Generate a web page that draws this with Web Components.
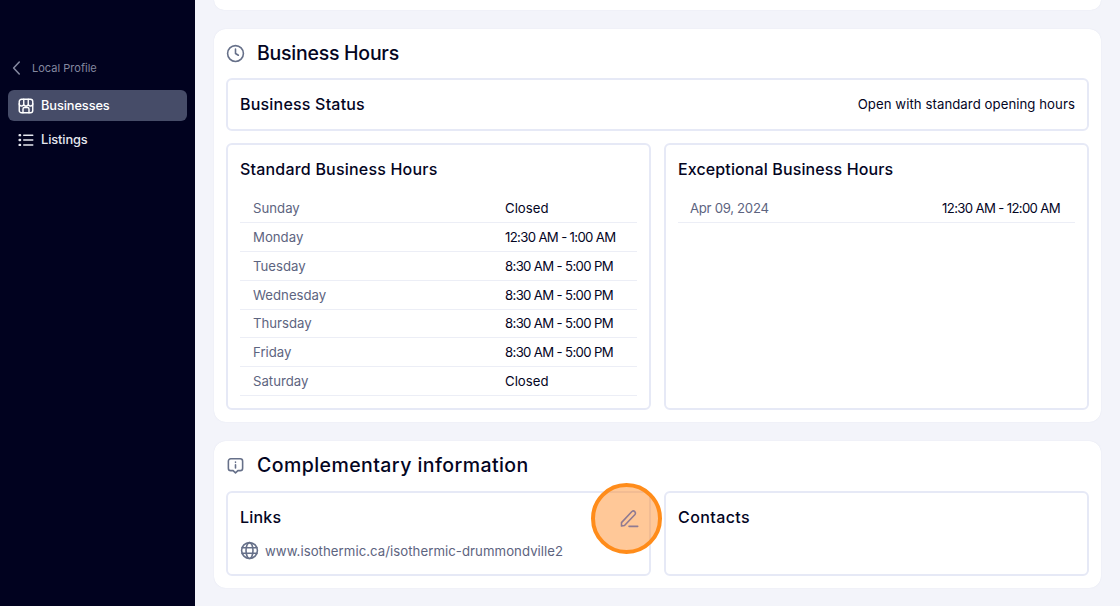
<!DOCTYPE html>
<html>
<head>
<meta charset="utf-8">
<title>Local Profile</title>
<style>
  html, body { margin: 0; height: 606px; overflow: hidden; }
  body { display: flex; background: #f3f4fa; font-family: "Inter", "Liberation Sans", sans-serif; color: #04051f; }
</style>
</head>
<body>
<side-nav></side-nav>
<main-view></main-view>

<script>
const ICONS = {
  back: '<path d="M15 4 L7.5 12 L15 20" />',
  store: '<rect x="3" y="3" width="18" height="18" rx="3"/><path d="M3 9a3 3 0 0 0 6 0a3 3 0 0 0 6 0a3 3 0 0 0 6 0M9 3v6M15 3v6M8 21v-5a2 2 0 0 1 2-2h4a2 2 0 0 1 2 2v5"/>',
  list: '<path d="M9 5.5h12M9 12h12M9 18.5h12"/><path d="M3.5 5.5h.6M3.5 12h.6M3.5 18.5h.6" stroke-width="3.2"/>',
  clock: '<circle cx="12" cy="12" r="10"/><path d="M12 6.5V12l3.6 2.2"/>',
  info: '<path d="M6 3.5h12a3 3 0 0 1 3 3v9a3 3 0 0 1-3 3h-3l-3 2.8-3-2.8H6a3 3 0 0 1-3-3v-9a3 3 0 0 1 3-3Z"/><path d="M12 11v4M12 7.6v.4"/>',
  globe: '<circle cx="12" cy="12" r="10"/><ellipse cx="12" cy="12" rx="4.4" ry="10"/><path d="M2.6 8.6h18.8M2.6 15.4h18.8"/>',
  pencil: '<path d="M3 17.5 15.5 4.2a2.6 2.6 0 0 1 3.7 3.6L6.6 21 3 21.6Z"/><path d="M12 22h10.5"/>'
};

function icon(name, size, width) {
  return `<svg width="${size}" height="${size}" viewBox="0 0 24 24" fill="none" stroke="currentColor" stroke-width="${width}" stroke-linecap="round" stroke-linejoin="round">${ICONS[name]}</svg>`;
}

class SideNav extends HTMLElement {
  constructor() {
    super();
    this.attachShadow({ mode: "open" });
    this.shadowRoot.innerHTML = `
      <style>
        :host { display: block; flex: 0 0 195px; height: 606px; box-sizing: border-box; background: #01021f; padding: 58px 8px 0; }
        .back { display: flex; align-items: center; gap: 6px; height: 20px; margin-bottom: 12px; color: #84889f; font-size: 11px; }
        .back span { letter-spacing: 0.02px; }
        .item { display: flex; align-items: center; gap: 6px; height: 31px; padding-left: 9px; border-radius: 6px; color: #e6e8f0; font-size: 12.8px; font-weight: 500; letter-spacing: -0.1px; margin-bottom: 3px; }
        .item.active { background: #464c68; color: #fff; }
      </style>
      <div class="back">${icon("back", 18, 2.1)}<span>Local Profile</span></div>
      <div class="item active">${icon("store", 18, 1.9)}<span>Businesses</span></div>
      <div class="item">${icon("list", 18, 2)}<span>Listings</span></div>
    `;
  }
}

class PanelCard extends HTMLElement {
  constructor() {
    super();
    this.attachShadow({ mode: "open" });
    this.shadowRoot.innerHTML = `
      <style>
        :host { display: block; background: #fff; border-radius: 12px; padding: 12px; box-shadow: 0 0 1px rgb(200 205 225 / 0.6); }
        header { display: flex; align-items: center; height: 24px; margin-bottom: var(--head-gap, 13px); font-size: 19.5px; font-weight: 500; letter-spacing: var(--head-track, 0); color: #04051f; }
        .ic { display: flex; width: 31px; color: #667089; }
        ::slotted([slot="icon"]) { display: flex; }
      </style>
      <header><span class="ic"><slot name="icon"></slot></span><span class="t"></span></header>
      <slot></slot>
    `;
  }
  connectedCallback() {
    this.shadowRoot.querySelector(".t").textContent = this.getAttribute("heading") || "";
  }
}

class InfoBox extends HTMLElement {
  constructor() {
    super();
    this.attachShadow({ mode: "open" });
    this.shadowRoot.innerHTML = `
      <style>
        :host { display: block; position: relative; box-sizing: border-box; border: 2px solid #e6e9f6; border-radius: 6px; padding: 14px 12px 0; background: #fff; }
        h3 { margin: 0; font-size: 16px; line-height: 20px; font-weight: 500; letter-spacing: var(--title-track, 0.2px); color: #04051f; }
      </style>
      <h3></h3>
      <slot></slot>
    `;
  }
  connectedCallback() {
    this.shadowRoot.querySelector("h3").textContent = this.getAttribute("heading") || "";
  }
}

class HoursRow extends HTMLElement {
  constructor() {
    super();
    this.attachShadow({ mode: "open" });
    this.shadowRoot.innerHTML = `
      <style>
        :host { display: grid; grid-template-columns: var(--label-w, 252px) 1fr; align-items: center; box-sizing: border-box; height: 28.83px; padding-left: var(--row-left, 13px); border-bottom: 1px solid #eceef6; font-size: 13.2px; white-space: nowrap; }
        .d { color: #5d6480; }
        .v { color: #04051f; text-align: var(--value-align, left); padding-right: var(--value-pad, 0); }
        .num { letter-spacing: -0.66px; }
        .d.num { letter-spacing: -0.3px; }
      </style>
      <span class="d"></span><span class="v"></span>
    `;
  }
  connectedCallback() {
    const d = this.shadowRoot.querySelector(".d");
    const v = this.shadowRoot.querySelector(".v");
    d.textContent = this.getAttribute("day");
    v.textContent = this.getAttribute("time");
    if (/\d/.test(d.textContent)) d.classList.add("num");
    if (/\d/.test(v.textContent)) v.classList.add("num");
  }
}

class MainView extends HTMLElement {
  constructor() {
    super();
    this.attachShadow({ mode: "open" });
    const rows = [
      ["Sunday", "Closed"], ["Monday", "12:30 AM - 1:00 AM"], ["Tuesday", "8:30 AM - 5:00 PM"],
      ["Wednesday", "8:30 AM - 5:00 PM"], ["Thursday", "8:30 AM - 5:00 PM"], ["Friday", "8:30 AM - 5:00 PM"],
      ["Saturday", "Closed"]
    ].map(r => `<hours-row day="${r[0]}" time="${r[1]}"></hours-row>`).join("");
    this.shadowRoot.innerHTML = `
      <style>
        :host { display: flex; flex-direction: column; flex: 1; gap: 19px; padding: 0 19px; box-sizing: border-box; height: 606px; }
        .stub { height: 10px; background: #fff; border-radius: 0 0 12px 12px; box-shadow: 0 0 1px rgb(200 205 225 / 0.6); }
        .hours { --head-track: -0.25px; }
        .comp { --head-track: 0.43px; --head-gap: 14px; }
        .status { height: 53px; margin-bottom: 12px; }
        .status-text { position: absolute; right: 12px; top: 14px; font-size: 13.2px; line-height: 20px; letter-spacing: 0.06px; color: #04051f; }
        .two { display: grid; grid-template-columns: 1fr 1fr; gap: 13px; }
        .tall { height: 267px; }
        .exc-box { --title-track: 0.12px; }
        .contacts { --title-track: 0.4px; }
        .rows { margin-top: 15.2px; }
        .exc { --label-w: 200px; --value-align: right; --value-pad: 15px; --row-left: 12px; }
        .short { height: 85px; }
        .link { display: flex; align-items: center; gap: 6px; margin-top: 14px; font-size: 13.2px; letter-spacing: 0.05px; color: #5d6480; }
        .link svg { color: #667089; }
        .pulse { position: absolute; left: 363px; top: -10px; width: 71px; height: 71px; box-sizing: border-box; padding: 0 0 2px 4px; border: 4px solid #ff8c1a; border-radius: 50%; background: rgb(255 140 40 / 0.48); display: flex; align-items: center; justify-content: center; color: #8f7a92; }
      </style>
      <div class="stub"></div>
      <panel-card class="hours" heading="Business Hours">
        <span slot="icon">${icon("clock", 19, 2)}</span>
        <info-box class="status" heading="Business Status"><span class="status-text">Open with standard opening hours</span></info-box>
        <div class="two">
          <info-box class="tall" heading="Standard Business Hours"><div class="rows">${rows}</div></info-box>
          <info-box class="tall exc-box" heading="Exceptional Business Hours"><div class="rows exc"><hours-row day="Apr 09, 2024" time="12:30 AM - 12:00 AM"></hours-row></div></info-box>
        </div>
      </panel-card>
      <panel-card class="comp" heading="Complementary information">
        <span slot="icon">${icon("info", 19, 2)}</span>
        <div class="two">
          <info-box class="short" heading="Links">
            <div class="link">${icon("globe", 19, 2)}<span>www.isothermic.ca/isothermic-drummondville2</span></div>
            <div class="pulse">${icon("pencil", 20, 1.9)}</div>
          </info-box>
          <info-box class="short contacts" heading="Contacts"></info-box>
        </div>
      </panel-card>
    `;
  }
}

customElements.define("side-nav", SideNav);
customElements.define("panel-card", PanelCard);
customElements.define("info-box", InfoBox);
customElements.define("hours-row", HoursRow);
customElements.define("main-view", MainView);
</script>
</body>
</html>
